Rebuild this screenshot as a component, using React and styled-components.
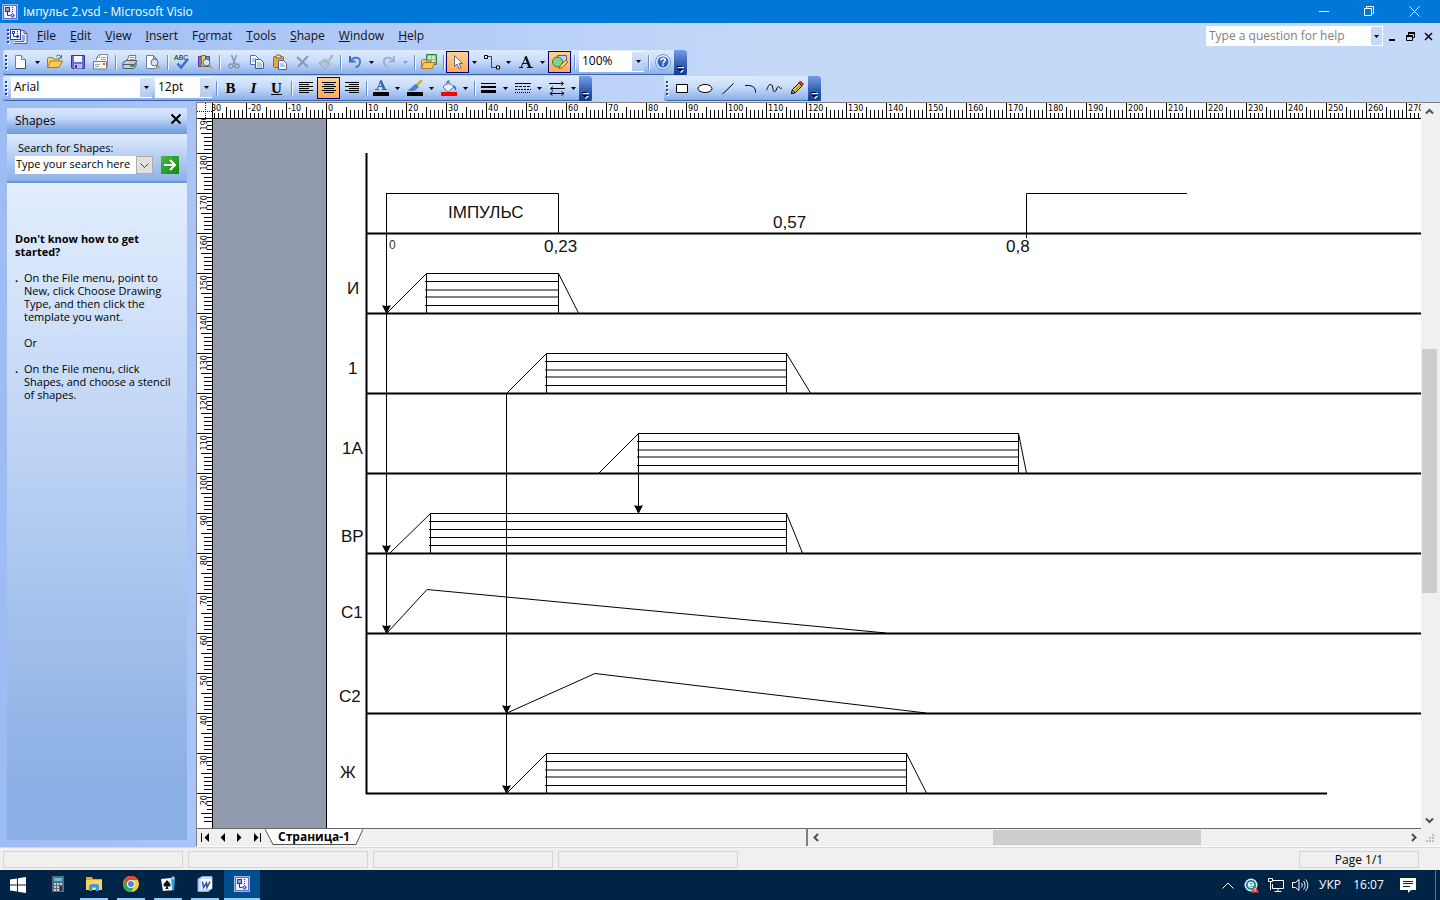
import React, { useLayoutEffect, useRef, useState } from "react";
import styled, { createGlobalStyle, css } from "styled-components";

const GlobalStyle = createGlobalStyle`
  * { box-sizing: border-box; }
  body { margin: 0; }
  button, input, select { font: inherit; color: inherit; margin: 0; }
  button { padding: 0; border: 0; background: none; }
`;

const ui = '"Open Sans", "Noto Sans", sans-serif';
const small = '"DejaVu Sans Condensed", "DejaVu Sans", "Noto Sans", sans-serif';

const Shell = styled.div`
  display: flex;
  flex-direction: column;
  height: 100vh;
  min-height: 600px;
  overflow: hidden;
  font: 12px/16px ${ui};
  color: #000;
  background: #c4d9f9;
`;

const Spacer = styled.div`
  flex: ${(p) => p.$grow || 1} 1 0;
`;

/* ---------- title bar ---------- */
const TitleBar = styled.header`
  display: flex;
  align-items: center;
  flex: none;
  height: 23px;
  padding: 0 3px 0 2px;
  color: #fff;
  background: #0078d7;
`;
const Title = styled.h1`
  margin: 0 0 0 5px;
  flex: 1;
  font-size: 12px;
  font-weight: 400;
`;
const WindowButton = styled.button`
  width: 45px;
  height: 22px;
  display: grid;
  place-items: center;
`;

/* ---------- menu ---------- */
const Bars = styled.div`
  flex: none;
  background: linear-gradient(90deg, #9ebcf4 0, #c4d8f8 760px);
`;
const MenuBar = styled.nav`
  display: flex;
  align-items: center;
  height: 27px;
  padding: 0 3px 1px 5px;
`;
const MenuItems = styled.div`
  display: flex;
  margin-left: 9px;
  gap: 14px;
`;
const MenuItem = styled.button`
  line-height: 20px;
  color: #111;
`;
const HelpBox = styled.label`
  display: flex;
  width: 177px;
  height: 20px;
  padding: 1px;
  background: #fff;
`;
const HelpInput = styled.input`
  flex: 1;
  min-width: 0;
  border: 0;
  padding: 0 2px;
  background: #fff;
  outline: 0;
  &::placeholder { color: #808080; opacity: 1; }
`;
const DropCap = styled.button`
  flex: none;
  width: 11px;
  display: grid;
  place-items: center;
  background: #c4d8f8;
`;
const MdiButton = styled.button`
  width: 18px;
  height: 20px;
  display: grid;
  place-items: center;
`;

/* ---------- tool bars ---------- */
const ToolRow = styled.div`
  display: flex;
  height: 26px;
  padding-left: 3px;
`;
const ToolBar = styled.div`
  display: flex;
  height: 25px;
  margin-left: ${(p) => p.$gap || 0}px;
  border-bottom: 1px solid #3e64a8;
  border-radius: 3px 0 0 3px;
  background: linear-gradient(#deebfe, #c8dcfa 45%, #8aaeea);
`;
const Grip = styled.span`
  flex: none;
  width: ${(p) => p.$w || 6}px;
  height: 15px;
  align-self: center;
  background:
    linear-gradient(#27418a 2px, transparent 2px) 2px 0 / 2px 4px repeat-y,
    linear-gradient(transparent 1px, #fff 1px, #fff 3px, transparent 3px) 3px 0 / 2px 4px repeat-y;
`;
const Tool = styled.button`
  flex: none;
  width: 23px;
  height: 22px;
  margin-top: 1px;
  display: grid;
  place-items: center;
  ${(p) => p.$on && css`
    border: 1px solid #000080;
    background: linear-gradient(#fed395, #ffa954);
  `}
`;
const ToolDrop = styled.button`
  flex: none;
  width: 11px;
  display: grid;
  place-items: center;
`;
const Sep = styled.span`
  flex: none;
  width: 6px;
  height: 15px;
  align-self: center;
  background: linear-gradient(90deg, transparent 3px, #6a8ccb 3px, #6a8ccb 4px, #f1f9ff 4px, #f1f9ff 5px, transparent 5px);
`;
const Overflow = styled.button`
  flex: none;
  width: 13px;
  height: 25px;
  padding: 0 0 2px 3px;
  display: flex;
  align-items: flex-end;
  border-radius: 0 3px 3px 0;
  background: linear-gradient(#759ee9, #3a66b8 50%, #0b3b99);
`;
const ComboBox = styled.label`
  flex: none;
  position: relative;
  width: ${(p) => p.$w}px;
  height: 21px;
  margin: 1px 1px 0 2px;
  background: #fff;
`;
const ComboSelect = styled.select`
  appearance: none;
  width: 100%;
  height: 19px;
  padding: 0 14px 0 3px;
  border: 0;
  outline: 0;
  background: transparent;
`;
const ComboArrow = styled.span`
  position: absolute;
  top: 1px;
  right: 0;
  bottom: 1px;
  width: 12px;
  display: grid;
  place-items: center;
  pointer-events: none;
  background: linear-gradient(#d6e5fc, #b0caf4);
`;
const Letter = styled.span`
  font: bold 15px/20px "Liberation Serif", serif;
  ${(p) => p.$italic && "font-style: italic;"}
  ${(p) => p.$underline && "text-decoration: underline;"}
`;

/* ---------- work area ---------- */
const Work = styled.main`
  flex: 1;
  min-height: 0;
  display: flex;
`;
const Side = styled.aside`
  flex: none;
  width: 196px;
  padding: 6px 9px 7px 7px;
  display: flex;
  flex-direction: column;
  background: linear-gradient(90deg, #9ebcf4, #a9c5f8);
`;
const PanelHead = styled.div`
  display: flex;
  align-items: center;
  justify-content: space-between;
  height: 26px;
  padding: 0 5px 0 8px;
  border-bottom: 1px solid #6d95d8;
  background: linear-gradient(#dae8fd, #c3d8f8 40%, #7ca3e1 90%);
`;
const PanelTitle = styled.h2`
  margin: 0;
  font-size: 12px;
  font-weight: 400;
`;
const SearchArea = styled.form`
  height: 49px;
  padding: 7px 8px 0;
  border-bottom: 2px solid #6d95d8;
  background: linear-gradient(#deebfe, #8db0e8);
  font: 11px/14px ${ui};
`;
const SearchLabel = styled.label`
  display: block;
  padding-left: 3px;
`;
const SearchRow = styled.div`
  display: flex;
  height: 18px;
  margin-top: 1px;
`;
const SearchInput = styled.input`
  width: 121px;
  padding: 0 0 2px 1px;
  border: 0;
  outline: 0;
  background: #fff;
`;
const SearchDrop = styled.button`
  width: 17px;
  display: grid;
  place-items: center;
  border: 1px solid #adadad;
  background: #e1e1e1;
`;
const Go = styled.button`
  width: 18px;
  margin-left: 8px;
  display: grid;
  place-items: center;
  background: linear-gradient(135deg, #4cb74c, #0c8a12);
`;
const HelpText = styled.div`
  flex: 1;
  padding: 49px 8px 0;
  overflow: hidden;
  background: linear-gradient(#e3eefe, #c4d8f6 33%, #8aafe4 92%);
  font: 11px/13px ${ui};
`;
const HelpTitle = styled.h3`
  margin: 0 0 13px;
  padding-right: 30px;
  font: bold 11px/13px ${ui};
`;
const HelpPara = styled.p`
  margin: 0 0 13px;
  padding-left: 9px;
  ${(p) => p.$bullet && css`
    &::before {
      content: ".";
      float: left;
      margin-left: -9px;
      font-weight: bold;
    }
  `}
`;

const Frame = styled.section`
  flex: 1;
  min-width: 0;
  display: flex;
  flex-direction: column;
  padding-right: 1px;
  border-top: 1px solid #808080;
  border-left: 1px solid #808080;
  border-bottom: 1px solid #fff;
  background: #f0f0f0;
`;
const FrameBody = styled.div`
  flex: 1;
  min-height: 0;
  display: flex;
`;
const View = styled.div`
  flex: 1;
  min-width: 0;
  display: grid;
  grid-template: 16px minmax(0, 1fr) / 16px minmax(0, 1fr);
  border-bottom: 1px solid #696969;
  background: #fff;
`;
const Corner = styled.svg`
  display: block;
  width: 16px;
  height: 16px;
  border-right: 1px solid #000;
  border-bottom: 1px solid #000;
`;
const RulerH = styled.svg`
  display: block;
  width: 100%;
  height: 16px;
  border-bottom: 1px solid #000;
  font: 9px ${small};
  overflow: hidden;
`;
const RulerV = styled.svg`
  display: block;
  width: 16px;
  height: 100%;
  border-right: 1px solid #000;
  font: 9px ${small};
  overflow: hidden;
`;
const Desk = styled.div`
  display: flex;
  min-width: 0;
  min-height: 0;
  padding-left: 113px;
  background: #929aae;
`;
const Page = styled.svg`
  display: block;
  flex: 1;
  min-width: 0;
  height: 100%;
  border-left: 1px solid #000;
  background: #fff;
  font: 17px "Liberation Sans", Arial, sans-serif;
`;

const ScrollV = styled.div`
  flex: none;
  width: 17px;
  margin-right: 1px;
  display: flex;
  flex-direction: column;
`;
const ScrollH = styled.div`
  flex: 630 1 0;
  height: 17px;
  display: flex;
`;
const ScrollButton = styled.button`
  width: 17px;
  height: 17px;
  flex: none;
  display: grid;
  place-items: center;
`;
const Thumb = styled.div`
  flex: ${(p) => p.$grow} 1 0;
  margin: ${(p) => (p.$v ? "0 1px" : "1px 0")};
  background: #cdcdcd;
`;
const BottomRow = styled.div`
  flex: none;
  display: flex;
  height: 17px;
`;
const TabArea = styled.div`
  flex: 608 1 0;
  display: flex;
  border-right: 2px solid #808080;
`;
const NavButton = styled.button`
  width: 17px;
  height: 17px;
  display: grid;
  place-items: center;
`;
const Tab = styled.button`
  width: 98px;
  height: 16px;
  display: grid;
  font: bold 12px/16px ${ui};
`;
const TabShape = styled.svg`
  grid-area: 1 / 1;
`;
const TabText = styled.span`
  grid-area: 1 / 1;
`;

/* ---------- status bar ---------- */
const StatusBar = styled.footer`
  flex: none;
  display: flex;
  align-items: center;
  gap: 5px;
  height: 23px;
  padding: 0 21px 0 3px;
  border-top: 1px solid #d7d7d7;
  background: #f0f0f0;
`;
const StatusCell = styled.div`
  width: ${(p) => p.$w}px;
  height: 17px;
  border: 1px solid #d4d4d4;
  text-align: center;
  line-height: 15px;
`;

/* ---------- task bar ---------- */
const TaskBar = styled.nav`
  flex: none;
  display: flex;
  align-items: center;
  height: 30px;
  color: #fff;
  background: #002446;
`;
const TaskButton = styled.button`
  flex: none;
  width: 37px;
  height: 30px;
  display: grid;
  place-items: center;
  border-bottom: 2px solid transparent;
  ${(p) => p.$start && css`
    width: 36px;
    margin-right: 3px;
    border-bottom: 0;
  `}
  ${(p) => p.$open && css`
    width: 28px;
    margin: 0 5px 0 4px;
    border-bottom-color: #99caf3;
  `}
  ${(p) => p.$active && css`
    width: 36px;
    margin: 0;
    background: #004f8c;
  `}
`;
const TrayButton = styled.button`
  width: ${(p) => p.$w}px;
  height: 30px;
  display: grid;
  place-items: center;
`;
const ShowDesktop = styled.button`
  width: 5px;
  height: 30px;
  margin-left: 8px;
  border-left: 1px solid #5d7488;
`;

/* ---------- icons ---------- */
const Svg = ({ w = 16, h = 16, children, ...rest }) => (
  <svg width={w} height={h} viewBox={`0 0 ${w} ${h}`} fill="none" aria-hidden="true" {...rest}>
    {children}
  </svg>
);
const Caret = ({ color = "#000" }) => (
  <Svg w={5} h={3}><path d="M0 0h5L2.500 3z" fill={color} /></Svg>
);
const VisioIcon = () => (
  <Svg>
    <rect x=".5" y=".5" width="15" height="15" fill="#5c6bd0" stroke="#aab4f0" />
    <rect x="2" y="2" width="12" height="12" fill="#eef1ff" />
    <rect x="3.500" y="3.500" width="4" height="4" fill="#8f9ff4" stroke="#2233a5" />
    <path d="M5.500 8v3.500H8" stroke="#2233a5" />
    <path d="M10.500 3v6" stroke="#2233a5" strokeDasharray="1 1" />
    <path d="m10.500 9 2.500 2.500-2.500 2.500L8 11.500z" fill="#4a5cd8" />
    <path d="M10 11h1v1h-1z" fill="#fff" />
  </Svg>
);
const DocIcon = () => (
  <Svg w={18} h={17}>
    <path d="M8 2.500h6l3 3v10H4" fill="#e8eefc" stroke="#4b5f9e" />
    <path d="M14 2.500v3h3M12 8h3M12 10h3M12 12h3M5 13.500h9" stroke="#4b5f9e" />
    <rect x=".5" y="1.500" width="10" height="10" fill="#fff" stroke="#2b3cb4" />
    <rect x="2.500" y="3.500" width="2" height="2" stroke="#2b3cb4" />
    <path d="M3.500 6v2.500H6" stroke="#2b3cb4" />
    <path d="M7.500 3v4" stroke="#2b3cb4" strokeDasharray="1 1" />
    <path d="m7.500 6.500 2 2-2 2-2-2z" fill="#2b3cb4" />
  </Svg>
);
const magnifier = (
  <>
    <path d="m12 11 3 3.500" stroke="#d99b2b" strokeWidth="2" />
    <circle cx="9.500" cy="8.500" r="3.500" fill="#cfe6f7" stroke="#56657c" />
  </>
);
const icons = {
  New: <Svg><path d="M2.500 1.500h6l4 4v9h-10z" fill="#fff" stroke="#6b7fa8" /><path d="M8.500 1.500v4h4" fill="#dbe5f7" stroke="#6b7fa8" /><path d="M3 14.500h9.500V6" stroke="#3b4f7a" /></Svg>,
  Open: <Svg><path d="M.5 13.500v-9l1-1h4l1 1.500h5.500v2" fill="#f6d36b" stroke="#a8782a" /><path d="M.5 13.500 3.500 7h12l-3.500 6.500z" fill="#fbc94e" stroke="#a8782a" /><path d="M9 2.500c2-2 4-1.500 5 .5M14.500 1v3h-3" stroke="#3d5f8f" /></Svg>,
  Save: <Svg><path d="M1.500 1.500h13v13h-12l-1-1z" fill="#6a6fd6" stroke="#34379a" /><path d="M4 2h8v6H4z" fill="#f6f8ff" /><path d="M4 10h8v4.500H4z" fill="#b9bdea" /><path d="M5 11h2v3H5z" fill="#34379a" /></Svg>,
  Mail: <Svg><path d="M3.500 6V3.500l3-3h8v12h-3" fill="#fff" stroke="#7f8796" /><path d="M3.500 3.500h3v-3M8 3.500h5M8 5.500h5" stroke="#9aa3b5" /><path d="M.5 7.500h13v7.500H.5z" fill="#f6f6f2" stroke="#74798a" /><path d="M2 10.500h5M2 12.500h4" stroke="#9aa3b5" /><path d="M10 9h2v2h-2z" fill="#e04c2f" /></Svg>,
  Print: <Svg><path d="M5 7 7 1.500h7L12.500 7" fill="#fff" stroke="#6c7789" /><path d="M8 3.500h4M7.500 5.500h4" stroke="#8c97a9" /><path d="m1 8.500 3-2h11l-2 3v4l-2 1H1z" fill="#c8ced8" stroke="#515b6c" /><path d="M1 10.500h11" stroke="#515b6c" /><path d="M12 9.500 15 7v4l-3 3.500z" fill="#7b8698" /><path d="M8 11h4v2H8z" fill="#27b327" /></Svg>,
  Preview: <Svg><path d="M1.500 1.500h7l3 3v10h-10z" fill="#fff" stroke="#6b7fa8" /><path d="M8.500 1.500v3h3" stroke="#6b7fa8" />{magnifier}</Svg>,
  Spelling: <Svg><text x="0" y="6" fontSize="7" fontFamily="Liberation Sans" fill="#111">ABC</text><path d="m3.500 9.500 3.500 4L14 5" stroke="#3a6cc8" strokeWidth="2.500" /></Svg>,
  Research: <Svg><path d="M1.500 2.500h3v10h-3z" fill="#8e6fc6" stroke="#4e3f8c" /><path d="M4.500 1.500h4v11h-4z" fill="#f0cf5e" stroke="#8b6b27" /><path d="M8.500 2.500h4v10h-4z" fill="#6f8edb" stroke="#3b4f9a" />{magnifier}</Svg>,
  Cut: <Svg><path d="M5.500 1 9 10M10.500 1 7 10" stroke="#8695b3" strokeWidth="1.500" /><circle cx="5" cy="12" r="2" stroke="#8695b3" strokeWidth="1.500" /><circle cx="11" cy="12" r="2" stroke="#8695b3" strokeWidth="1.500" /></Svg>,
  Copy: <Svg><path d="M1.500 1.500h5l3 3v6h-8z" fill="#fff" stroke="#4a6fb5" /><path d="M3 5h4M3 7h5" stroke="#6d90d0" /><path d="M6.500 5.500h5l3 3v6h-8z" fill="#fff" stroke="#3a5ca5" /><path d="M8 9h4M8 11h5M8 13h5" stroke="#6d90d0" /></Svg>,
  Paste: <Svg><rect x="1.500" y="2.500" width="10" height="11" rx="1" fill="#eda93c" stroke="#9c6417" /><path d="M4 4V2l1-1h3l1 1v2z" fill="#f7e3a8" stroke="#80622f" /><path d="M6.500 6.500h5l3 3v6h-8z" fill="#fff" stroke="#4a6095" /><path d="M8 10h4M8 12h5" stroke="#6d90d0" /></Svg>,
  Delete: <Svg><path d="m2 3 11 10M13 2 3 13" stroke="#8a98b8" strokeWidth="2" /></Svg>,
  "Format painter": <Svg><path d="m15 1-4 5" stroke="#a0aac0" strokeWidth="2" /><path d="m7 4 6 4-1.500 2L5.500 6z" fill="#b3bccd" /><path d="m5.500 6 6 4-4.500 5L1 9z" fill="#b9c2d2" stroke="#9ca8be" /></Svg>,
  Undo: <Svg><path d="M3 2v5.500h5.500" stroke="#3b63bd" strokeWidth="2" /><path d="M3.500 7c3-5 10-4 9.500 1 0 3-2 4.500-4.500 5.500" stroke="#4a78d0" strokeWidth="2" /></Svg>,
  Redo: <Svg><path d="M13 2v5.500H7.500" stroke="#95a5c4" strokeWidth="1.500" /><path d="M12.500 7c-3-5-10-4-9.500 1 0 2 1.500 4 3.500 4.500" stroke="#a0afcc" strokeWidth="2" /></Svg>,
  Shapes: <Svg><path d="M5.500.5h10v10h-10z" fill="#8cc98c" stroke="#37813f" /><path d="M7 2h3v3H7zM11 2h3v3h-3zM11 6h3v3h-3z" fill="#c9ebc5" /><path d="M.5 14.500v-8l1-1h3l1 1.500h4.500v2" fill="#f6d36b" stroke="#a8782a" /><path d="m.5 14.500 2.500-6h11l-3 6z" fill="#fbc94e" stroke="#a8782a" /></Svg>,
  Pointer: <Svg><path d="M4.500 1.500v11l2.500-2.500 2 4.500 2-1-2-4h3.500z" fill="#fff" stroke="#5b6c93" /></Svg>,
  Connector: <Svg w={18}><path d="M4 2.500h4.500v11H14" stroke="#1f47a8" /><path d="M1.500 1.500h3v3h-3zM13.500 12h3v3h-3z" fill="#fff" stroke="#000" /></Svg>,
  Text: <Svg><path d="m3 13.500 5-11M4.500 9.500h6M1 13.500h4M9 13.500h6" stroke="#111" /><path d="m7.500 2.500 4.500 11" stroke="#111" strokeWidth="2.500" /></Svg>,
  "Drawing tools": <Svg><path d="M5.500 1.500h9v8h-9z" fill="#b9d1f4" stroke="#4765a8" /><circle cx="5.500" cy="8" r="5" fill="#8ccf8a" stroke="#2f7b3c" /><path d="m7 14.500 1.500-3.500L14 6l2 2-5.500 5.500z" fill="#f3d06a" stroke="#8b5a2a" /></Svg>,
  Help: <Svg><circle cx="8" cy="8" r="7.500" fill="#e4eefc" stroke="#6f93d2" /><circle cx="8" cy="8" r="5.500" fill="#2f62c9" /><path d="M5.800 6.500c0-3 4.600-2.600 4.400-.2C10.100 7.600 8 7.700 8 9.500M8 10.600v1.400" stroke="#fff" strokeWidth="1.600" /></Svg>,
  "Font colour": <Svg><path d="m4 9.500 4-9M5.500 6.500h4M2 9.500h4M9 9.500h5" stroke="#3b63a8" /><path d="m7.500.5 4 9" stroke="#3b63a8" strokeWidth="2.500" /><path d="M0 12h16v4H0z" fill="#000" /></Svg>,
  "Line colour": <Svg><path d="m15 0-7 7" stroke="#e0a63a" strokeWidth="2.500" /><path d="m9 4 3 3-4 3.500C5 12 2 10.500 0 10.500 3 9.500 5 6 9 4z" fill="#4d7ed2" /><path d="M0 12h16v4H0z" fill="#000" /></Svg>,
  "Fill colour": <Svg><path d="m7 2 6 5-6 5-5-5z" fill="#e9f0fb" stroke="#56709f" /><path d="M6 5V1.500l2-1v4" stroke="#56709f" /><path d="M12 5c3 1 3.500 3 3 6l-2-3z" fill="#3d70cc" /><path d="M0 12h16v4H0z" fill="#f00" /></Svg>,
  "Line weight": <Svg><path d="M0 3.500h15" stroke="#000" /><path d="M0 7h15" stroke="#000" strokeWidth="2" /><path d="M0 11.500h15" stroke="#000" strokeWidth="3" /></Svg>,
  "Line pattern": <Svg><path d="M0 3.500h16" stroke="#000" /><path d="M0 6.500h16" stroke="#000" strokeDasharray="3 1" /><path d="M0 9.500h16" stroke="#000" strokeDasharray="2 1" /><path d="M0 12.500h16" stroke="#000" strokeDasharray="1 1" /></Svg>,
  "Line ends": <Svg><path d="M0 3.500h14M12 1.500l2.500 2-2.500 2M2 8.500h14M4 6.500l-2.500 2 2.500 2M1 13.500h14M3.500 11.500l-2.500 2 2.500 2M12.500 11.500l2.500 2-2.500 2" stroke="#000" /></Svg>,
  Rectangle: <Svg><path d="M2.500 4.500h11v8h-11z" fill="#fff" stroke="#000" /></Svg>,
  Ellipse: <Svg><ellipse cx="8" cy="8.500" rx="7" ry="4" fill="#fff" stroke="#000" /></Svg>,
  Line: <Svg><path d="M2.500 14 13.500 3.500" stroke="#000" /></Svg>,
  Arc: <Svg><path d="M2 5.500c6-.5 11 1 10.500 7" stroke="#000" /></Svg>,
  Freeform: <Svg><path d="M0 10.500c2-2 2-6 4.500-6C8 5 6 11.500 8.500 11.500s2-5 4-5c1.500 0 1 3 3.500 1.500" stroke="#000" /></Svg>,
  Pencil: <Svg><path d="m2.500 13.500 1-4 6.500-6.500 3 3-6.500 6.500z" fill="#f5cf3d" stroke="#000" /><path d="m10 2.500 1.500-1.500 3 3L13 5.500z" fill="#d9483b" stroke="#7c2018" /><path d="m3.500 10 2.500 2.500-3.500 1z" fill="#fff" stroke="#000" /><path d="m6 10.500 5-5" stroke="#7b5b12" /></Svg>,
};
const Align = ({ rows }) => (
  <Svg>
    {rows.map(([x, w], i) => <path key={i} d={`M${x} ${2.5 + i * 2}h${w}`} stroke="#000" />)}
  </Svg>
);
icons["Align left"] = <Align rows={[[1, 14], [1, 10], [1, 14], [1, 10], [1, 14], [1, 10]]} />;
icons.Center = <Align rows={[[1, 14], [3, 10], [1, 14], [3, 10], [1, 14], [3, 10]]} />;
icons["Align right"] = <Align rows={[[1, 14], [5, 10], [1, 14], [5, 10], [1, 14], [5, 10]]} />;
icons.Bold = <Letter>B</Letter>;
icons.Italic = <Letter $italic>I</Letter>;
icons.Underline = <Letter $underline>U</Letter>;

const T = ({ n, drop, on, muted }) => (
  <>
    <Tool type="button" aria-label={n} $on={on}>{icons[n]}</Tool>
    {drop && <ToolDrop type="button" aria-label={`${n} options`}><Caret color={muted ? "#8a98b8" : "#000"} /></ToolDrop>}
  </>
);
const Combo = ({ label, value, w }) => (
  <ComboBox $w={w}>
    <ComboSelect aria-label={label} defaultValue={value}><option>{value}</option></ComboSelect>
    <ComboArrow><Caret /></ComboArrow>
  </ComboBox>
);
const More = () => (
  <Overflow type="button" aria-label="Toolbar options">
    <Svg w={7} h={7}><path d="M1 1.500h6" stroke="#fff" /><path d="M1 4h6L4 7z" fill="#fff" /><path d="M0 .5h5" stroke="#000" /><path d="M0 3h6L3 6z" fill="#000" /></Svg>
  </Overflow>
);

/* ---------- rulers: 4px a unit ---------- */
const tickLength = (i) => (i % 10 === 0 ? 15 : i % 10 === 5 ? 11 : i % 10 < 5 ? 5 : 8);

function useBox() {
  const ref = useRef(null);
  const [box, setBox] = useState({ width: 0, height: 0 });
  useLayoutEffect(() => {
    const measure = () => {
      const { width, height } = ref.current.getBoundingClientRect();
      setBox({ width, height });
    };
    measure();
    window.addEventListener("resize", measure);
    return () => window.removeEventListener("resize", measure);
  }, []);
  return [ref, box];
}

function HorizontalRuler() {
  const [ref, { width }] = useBox();
  const zero = 113;
  const units = Array.from({ length: Math.ceil(width / 4) }, (_, k) => k - 28);
  return (
    <RulerH ref={ref} aria-hidden="true">
      <path
        stroke="#000"
        d={units.map((u) => `M${zero + u * 4 + 0.5} 15v-${tickLength((u + 100) % 10)}`).join("")}
      />
      {units.filter((u) => u % 10 === 0).concat(-30).map((u) => (
        <text key={u} x={zero + u * 4 + 2} y="8">{u}</text>
      ))}
    </RulerH>
  );
}
function VerticalRuler() {
  const [ref, { height }] = useBox();
  const units = Array.from({ length: Math.ceil(height / 4) }, (_, k) => k);
  return (
    <RulerV ref={ref} aria-hidden="true">
      <path
        stroke="#000"
        d={units.map((k) => `M15 ${k * 4 - 5.5}h-${tickLength(k % 10)}`).join("")}
      />
      {units.filter((k) => k % 10 === 0).map((k) => (
        <text key={k} transform={`translate(10 ${k * 4 - 4}) rotate(-90)`} textAnchor="end">{190 - k}</text>
      ))}
    </RulerV>
  );
}

/* ---------- timing diagram ---------- */
const axes = [114, 194, 274, 354, 434, 514, 594];
const labels = [
  ["ІМПУЛЬС", 121, 99], ["0,57", 446, 109], ["0,23", 217, 133], ["0,8", 679, 133],
  ["И", 20, 175], ["1", 21, 255], ["1А", 15, 335], ["ВР", 14, 423], ["С1", 14, 499], ["С2", 12, 583], ["Ж", 13, 659],
];
// foot, left, right, end of the falling edge, base line, offsets of the inner lines
const blocks = [
  [60, 99, 231, 251, 194, [8, 16.5, 23.5, 32]],
  [180, 219, 459, 483, 274, [8, 16.5, 23.5, 32]],
  [272, 311, 691, 699, 354, [8, 16.5, 23.5, 32]],
  [63, 103, 459, 475, 434, [8, 16, 24, 32]],
  [180, 219, 579, 599, 674, [8, 16.5, 23.5, 32]],
];
const arrows = [[59, 74, 194], [59, 194, 434], [59, 434, 514], [179, 274, 594], [179, 594, 674], [311, 354, 394]];

function Diagram() {
  return (
    <Page role="img" aria-label="Timing diagram">
      <g stroke="#000" strokeWidth="2">
        <path d="M39.500 34v641" />
        {axes.map((y) => <path key={y} d={`M39 ${y + 0.5}H3000`} />)}
        <path d="M39 674.500h961" />
      </g>
      <g stroke="#000" fill="none">
        <path d="M59.500 114V74.500h172V114M699.500 119V74.500H860" />
        {blocks.map(([a, b, c, d, y, lines], i) => (
          <React.Fragment key={i}>
            <path d={`M${a} ${y}L${b + 0.5} ${y - 39.5}M${c + 0.5} ${y - 39.5}L${d + 0.5} ${y}`} />
            <path d={`M${b + 0.5} ${y}v-39.500H${c + 0.5}V${y}`} />
            {lines.map((o) => <path key={o} d={`M${b - 1} ${y - 39.5 + o}H${c}`} />)}
          </React.Fragment>
        ))}
        <path d="m60 514 40-43.500L559 514M180 594l88-39.500L599 594" />
        {arrows.map(([x, y1, y2], i) => <path key={i} d={`M${x + 0.5} ${y1}V${y2}`} />)}
      </g>
      {arrows.map(([x, , y], i) => <path key={i} d={`M${x - 4} ${y - 8}q4.500 2 9 0L${x + 0.5} ${y + 1}z`} />)}
      {labels.map(([t, x, y]) => <text key={t} x={x} y={y} fill="#111">{t}</text>)}
      <text x="62" y="130" fontSize="12" fill="#333">0</text>
    </Page>
  );
}

const Chevron = ({ d }) => <Svg w={9} h={9}><path d={d} stroke="#505050" strokeWidth="2" /></Svg>;

const menus = [["", "F", "ile"], ["", "E", "dit"], ["", "V", "iew"], ["", "I", "nsert"], ["F", "o", "rmat"], ["", "T", "ools"], ["", "S", "hape"], ["", "W", "indow"], ["", "H", "elp"]];

const navs = [
  ["First page", "M0 0h1v9H0zM8 0v9L3.500 4.500z"],
  ["Previous page", "M7 0v9L2.500 4.500z"],
  ["Next page", "M2 0v9l4.500-4.500z"],
  ["Last page", "M8 0h1v9H8zM2 0v9l4.500-4.500z"],
];

export default function App() {
  return (
    <Shell>
      <GlobalStyle />
      <TitleBar>
        <VisioIcon />
        <Title>Імпульс 2.vsd - Microsoft Visio</Title>
        <WindowButton aria-label="Minimize"><Svg w={11} h={11}><path d="M0 5.500h10" stroke="#fff" /></Svg></WindowButton>
        <WindowButton aria-label="Restore"><Svg w={11} h={11}><path d="M.5 2.500h7v7h-7zM2.500 2.500v-2h7v7h-2" stroke="#fff" /></Svg></WindowButton>
        <WindowButton aria-label="Close"><Svg w={11} h={11}><path d="m.5.5 10 10M10.500.5l-10 10" stroke="#fff" /></Svg></WindowButton>
      </TitleBar>

      <Bars>
        <MenuBar>
          <Grip $w={5} />
          <DocIcon />
          <MenuItems>
            {menus.map(([a, b, c]) => <MenuItem type="button" key={b + c}>{a}<u>{b}</u>{c}</MenuItem>)}
          </MenuItems>
          <Spacer />
          <HelpBox>
            <HelpInput aria-label="Type a question for help" placeholder="Type a question for help" />
            <DropCap type="button" aria-label="Recent questions"><Caret /></DropCap>
          </HelpBox>
          <MdiButton aria-label="Minimize drawing"><Svg w={9} h={9}><path d="M1 8h6" stroke="#000" strokeWidth="2" /></Svg></MdiButton>
          <MdiButton aria-label="Restore drawing"><Svg w={9} h={9}><path d="M2 1h7M0 4h7" stroke="#000" strokeWidth="2" /><path d="M2.500 1v2M8.500 1v4.500H7M.5 4v4.500h6V4" stroke="#000" /></Svg></MdiButton>
          <MdiButton aria-label="Close drawing"><Svg w={9} h={9}><path d="m1 1 7 7M8 1 1 8" stroke="#000" strokeWidth="1.500" /></Svg></MdiButton>
        </MenuBar>

        <ToolRow>
          <ToolBar>
            <Grip />
            <T n="New" drop /><T n="Open" /><T n="Save" /><T n="Mail" /><Sep />
            <T n="Print" /><T n="Preview" /><Sep />
            <T n="Spelling" /><T n="Research" /><Sep />
            <T n="Cut" /><T n="Copy" /><T n="Paste" /><T n="Delete" /><T n="Format painter" /><Sep />
            <T n="Undo" drop /><T n="Redo" drop muted /><Sep />
            <T n="Shapes" /><Sep />
            <T n="Pointer" drop on /><T n="Connector" drop /><T n="Text" drop /><T n="Drawing tools" on /><Sep />
            <Combo label="Zoom" value="100%" w={65} /><Sep />
            <T n="Help" />
            <More />
          </ToolBar>
        </ToolRow>
        <ToolRow>
          <ToolBar>
            <Grip />
            <Combo label="Font" value="Arial" w={141} />
            <Combo label="Font size" value="12pt" w={57} /><Sep />
            <T n="Bold" /><T n="Italic" /><T n="Underline" /><Sep />
            <T n="Align left" /><T n="Center" on /><T n="Align right" /><Sep />
            <T n="Font colour" drop /><T n="Line colour" drop /><T n="Fill colour" drop /><Sep />
            <T n="Line weight" drop /><T n="Line pattern" drop /><T n="Line ends" drop />
            <More />
          </ToolBar>
          <ToolBar $gap={72}>
            <Grip />
            <T n="Rectangle" /><T n="Ellipse" /><T n="Line" /><T n="Arc" /><T n="Freeform" /><T n="Pencil" />
            <More />
          </ToolBar>
        </ToolRow>
      </Bars>

      <Work>
        <Side>
          <PanelHead>
            <PanelTitle>Shapes</PanelTitle>
            <button type="button" aria-label="Close panel"><Svg w={12} h={12}><path d="m1.500 1.500 9 9M10.500 1.500l-9 9" stroke="#000" strokeWidth="2" /></Svg></button>
          </PanelHead>
          <SearchArea onSubmit={(e) => e.preventDefault()}>
            <SearchLabel htmlFor="shape-search">Search for Shapes:</SearchLabel>
            <SearchRow>
              <SearchInput id="shape-search" defaultValue="Type your search here" />
              <SearchDrop type="button" aria-label="Recent searches"><Svg w={9} h={5}><path d="m.5.5 4 4 4-4" stroke="#444" /></Svg></SearchDrop>
              <Go aria-label="Search"><Svg w={14} h={12}><path d="M1 6h11M7 1l5 5-5 5" stroke="#fff" strokeWidth="2" /></Svg></Go>
            </SearchRow>
          </SearchArea>
          <HelpText>
            <HelpTitle>Don't know how to get started?</HelpTitle>
            <HelpPara $bullet>On the File menu, point to New, click Choose Drawing Type, and then click the template you want.</HelpPara>
            <HelpPara>Or</HelpPara>
            <HelpPara $bullet>On the File menu, click Shapes, and choose a stencil of shapes.</HelpPara>
          </HelpText>
        </Side>

        <Frame>
          <FrameBody>
            <View>
              <Corner aria-hidden="true"><path d="M0 8.500h16M8.500 0v16" stroke="#00f" strokeDasharray="1 1" /></Corner>
              <HorizontalRuler />
              <VerticalRuler />
              <Desk><Diagram /></Desk>
            </View>
            <ScrollV>
              <ScrollButton aria-label="Scroll up"><Chevron d="m1 6.500 3.500-3.500L8 6.500" /></ScrollButton>
              <Spacer $grow={229} />
              <Thumb $v $grow={243} />
              <Spacer $grow={219} />
              <ScrollButton aria-label="Scroll down"><Chevron d="m1 2.500 3.500 3.500L8 2.500" /></ScrollButton>
            </ScrollV>
          </FrameBody>
          <BottomRow>
            <TabArea>
              {navs.map(([n, d]) => (
                <NavButton type="button" key={n} aria-label={n}><Svg w={9} h={9}><path d={d} fill="#000" /></Svg></NavButton>
              ))}
              <Tab type="button">
                <TabShape width="98" height="16" aria-hidden="true"><path d="M0 0 8 15.500h83L98 0" fill="#fff" stroke="#555" /></TabShape>
                <TabText>Страница-1</TabText>
              </Tab>
            </TabArea>
            <ScrollH>
              <ScrollButton aria-label="Scroll left"><Chevron d="M6 1 2.500 4.500 6 8" /></ScrollButton>
              <Spacer $grow={168} />
              <Thumb $grow={208} />
              <Spacer $grow={204} />
              <ScrollButton aria-label="Scroll right"><Chevron d="m3 1 3.500 3.500L3 8" /></ScrollButton>
              <Svg w={17} h={17}><path d="M10 5h2v2h-2zM7 8h2v2H7zM10 8h2v2h-2zM4 11h2v2H4zM7 11h2v2H7zM10 11h2v2h-2z" fill="#bbb" /></Svg>
            </ScrollH>
          </BottomRow>
        </Frame>
      </Work>

      <StatusBar>
        <StatusCell $w={180} /><StatusCell $w={180} /><StatusCell $w={180} /><StatusCell $w={180} />
        <Spacer />
        <StatusCell $w={120}>Page 1/1</StatusCell>
      </StatusBar>

      <TaskBar>
        <TaskButton $start aria-label="Start"><Svg><path d="M0 2.500 7 1.500v6H0zM8 1.300 16 0v7.500H8zM0 8.500h7v6l-7-1zM8 8.500h8V16l-8-1.300z" fill="#fff" /></Svg></TaskButton>
        <TaskButton aria-label="Calculator"><Svg><path d="M2 0h12v16H2z" fill="#5d6b76" /><path d="M4 2h8v3H4z" fill="#4cc5e8" /><path d="M4 7h2v2H4zM7 7h2v2H7zM10 7h2v2h-2zM4 10h2v2H4zM7 10h2v2H7zM4 13h2v2H4zM7 13h2v2H7z" fill="#c7d0d6" /><path d="M10 10h2v5h-2z" fill="#12365e" /></Svg></TaskButton>
        <TaskButton $open aria-label="Explorer"><Svg><path d="M0 1h6l1 2h9v11H0z" fill="#e3a52c" /><path d="M0 4h16v10H0z" fill="#fcd462" /><path d="M3 15V9.500L5 8h6l2 1.500V15h-3v-3.500H6V15z" fill="#3f97dd" /></Svg></TaskButton>
        <TaskButton $open aria-label="Chrome">
          <Svg>
            <circle cx="8" cy="8" r="8" fill="#fcc934" />
            <path d="M1.070 4A8 8 0 0 1 14.930 4H8L4.540 10z" fill="#ea4335" />
            <path d="M1.070 4A8 8 0 0 0 8 16L11.460 10H4.540z" fill="#34a853" />
            <circle cx="8" cy="8" r="4" fill="#fff" /><circle cx="8" cy="8" r="3" fill="#4285f4" />
          </Svg>
        </TaskButton>
        <TaskButton $open aria-label="Solitaire"><Svg><path d="m8 3 7-1-1 12-5 1z" fill="#2fa3df" /><path d="m1 3 10-1 1 12-9 1z" fill="#f5f8fa" /><path d="M7 4c1 2 4 3 3.500 5.500-.5 1.500-2 1.500-3 .5l1 3h-3l1-3c-1 1-3 .5-3-1C3.500 7 6 6 7 4z" fill="#111" /><path d="M13 0v4M11 2h4" stroke="#aee6ff" /></Svg></TaskButton>
        <TaskButton $open aria-label="Word"><Svg><path d="M1 3 5 .500h10v12l-4 3H1z" fill="#cfdcf5" stroke="#8ea7dc" /><path d="M4 3h11v10H4z" fill="#f8faff" /><path d="m5.500 5.500 1 6L9.500 7l.5 4.500 3-6" stroke="#2b4fa5" strokeWidth="1.500" /></Svg></TaskButton>
        <TaskButton $open $active aria-label="Visio"><VisioIcon /></TaskButton>
        <Spacer />
        <TrayButton $w={22} aria-label="Show hidden icons"><Svg w={12} h={7}><path d="m.5 6.500 5.500-5.500 5.500 5.500" stroke="#fff" /></Svg></TrayButton>
        <TrayButton $w={25} aria-label="Antivirus"><Svg><circle cx="7" cy="8" r="6.500" fill="#d9f0f1" /><circle cx="7" cy="8" r="5" fill="#068a97" /><path d="M4.500 8h5c0-3.500-5-3.500-5 0 0 3 3.500 3 4.500 1.500" stroke="#fff" strokeWidth="1.300" /><path d="m11 8.500 4 7H7z" fill="#e0483e" /><path d="M11 11v2M11 13.500v1" stroke="#fff" /></Svg></TrayButton>
        <TrayButton $w={24} aria-label="Network"><Svg><path d="M5 3.500h10.500v8H4.500V7M10 11.500v3M6.500 14.500h7M.5 1.500h4v3h-4zM2.500 4.500V13" stroke="#fff" /></Svg></TrayButton>
        <TrayButton $w={24} aria-label="Volume"><Svg w={17}><path d="M.5 5.500h3l3.500-3v11l-3.500-3h-3z" stroke="#fff" /><path d="M9.500 6c1 1.500 1 3 0 4.500M11.500 4c2 2.500 2 6 0 8.500M13.500 2.500c3 3.500 3 8 0 11.500" stroke="#fff" /></Svg></TrayButton>
        <TrayButton $w={36}>УКР</TrayButton>
        <TrayButton $w={41}>16:07</TrayButton>
        <TrayButton $w={38} aria-label="Notifications"><Svg w={16} h={15}><path d="M0 0h16v12h-5l-3 3v-3H0z" fill="#fff" /><path d="M3 3.500h10M3 5.500h10M3 8.500h7" stroke="#002446" /></Svg></TrayButton>
        <ShowDesktop aria-label="Show desktop" />
      </TaskBar>
    </Shell>
  );
}
